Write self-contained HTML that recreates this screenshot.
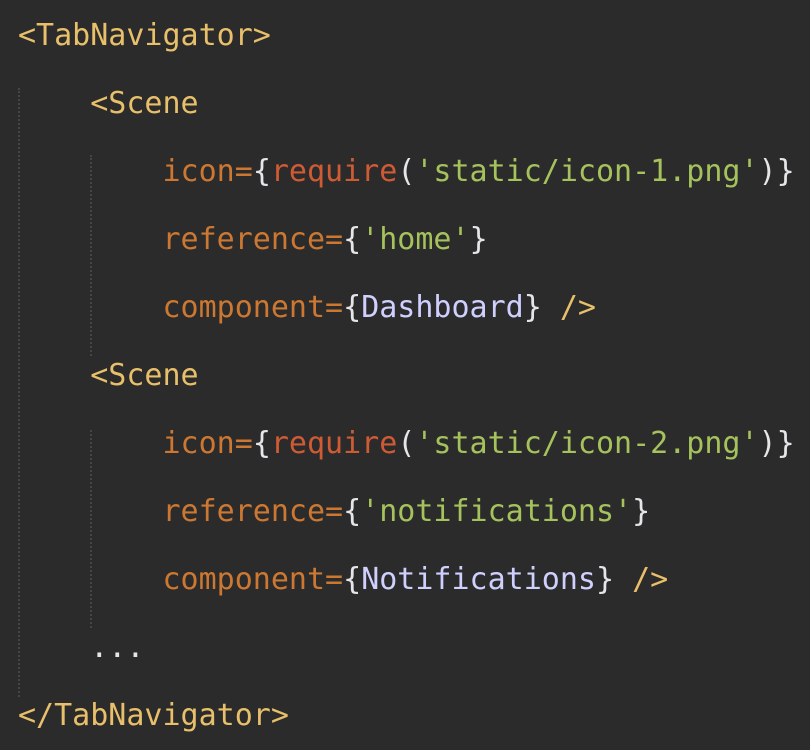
<!DOCTYPE html>
<html><head><meta charset="utf-8"><style>
html,body{margin:0;padding:0;background:#2b2b2b;width:810px;height:746px;overflow:hidden}
.code{position:absolute;left:18px;top:2px;font-family:"DejaVu Sans Mono","Liberation Mono",monospace;font-size:30px;line-height:68px;white-space:pre;color:#e0e0e0}
.t{color:#e8bf6a}.a{color:#cc7832}.r{color:#cf5b35}.s{color:#a5c25c}.c{color:#d0d0ff}.p{color:#e6e6ea}
.g{position:absolute;width:0;border-left:2px dotted #454545}
</style></head><body>
<div class="g" style="left:18px;top:88px;height:609px"></div>
<div class="g" style="left:90px;top:155px;height:201px"></div>
<div class="g" style="left:90px;top:430px;height:198px"></div>
<div class="code"><span class="t">&lt;TabNavigator&gt;</span>
    <span class="t">&lt;Scene</span>
        <span class="a">icon=</span><span class="p">{</span><span class="r">require</span><span class="p">(</span><span class="s">'static/icon-1.png'</span><span class="p">)}</span>
        <span class="a">reference=</span><span class="p">{</span><span class="s">'home'</span><span class="p">}</span>
        <span class="a">component=</span><span class="p">{</span><span class="c">Dashboard</span><span class="p">}</span> <span class="t">/&gt;</span>
    <span class="t">&lt;Scene</span>
        <span class="a">icon=</span><span class="p">{</span><span class="r">require</span><span class="p">(</span><span class="s">'static/icon-2.png'</span><span class="p">)}</span>
        <span class="a">reference=</span><span class="p">{</span><span class="s">'notifications'</span><span class="p">}</span>
        <span class="a">component=</span><span class="p">{</span><span class="c">Notifications</span><span class="p">}</span> <span class="t">/&gt;</span>
    <span class="p">...</span>
<span class="t">&lt;/TabNavigator&gt;</span></div>
</body></html>
